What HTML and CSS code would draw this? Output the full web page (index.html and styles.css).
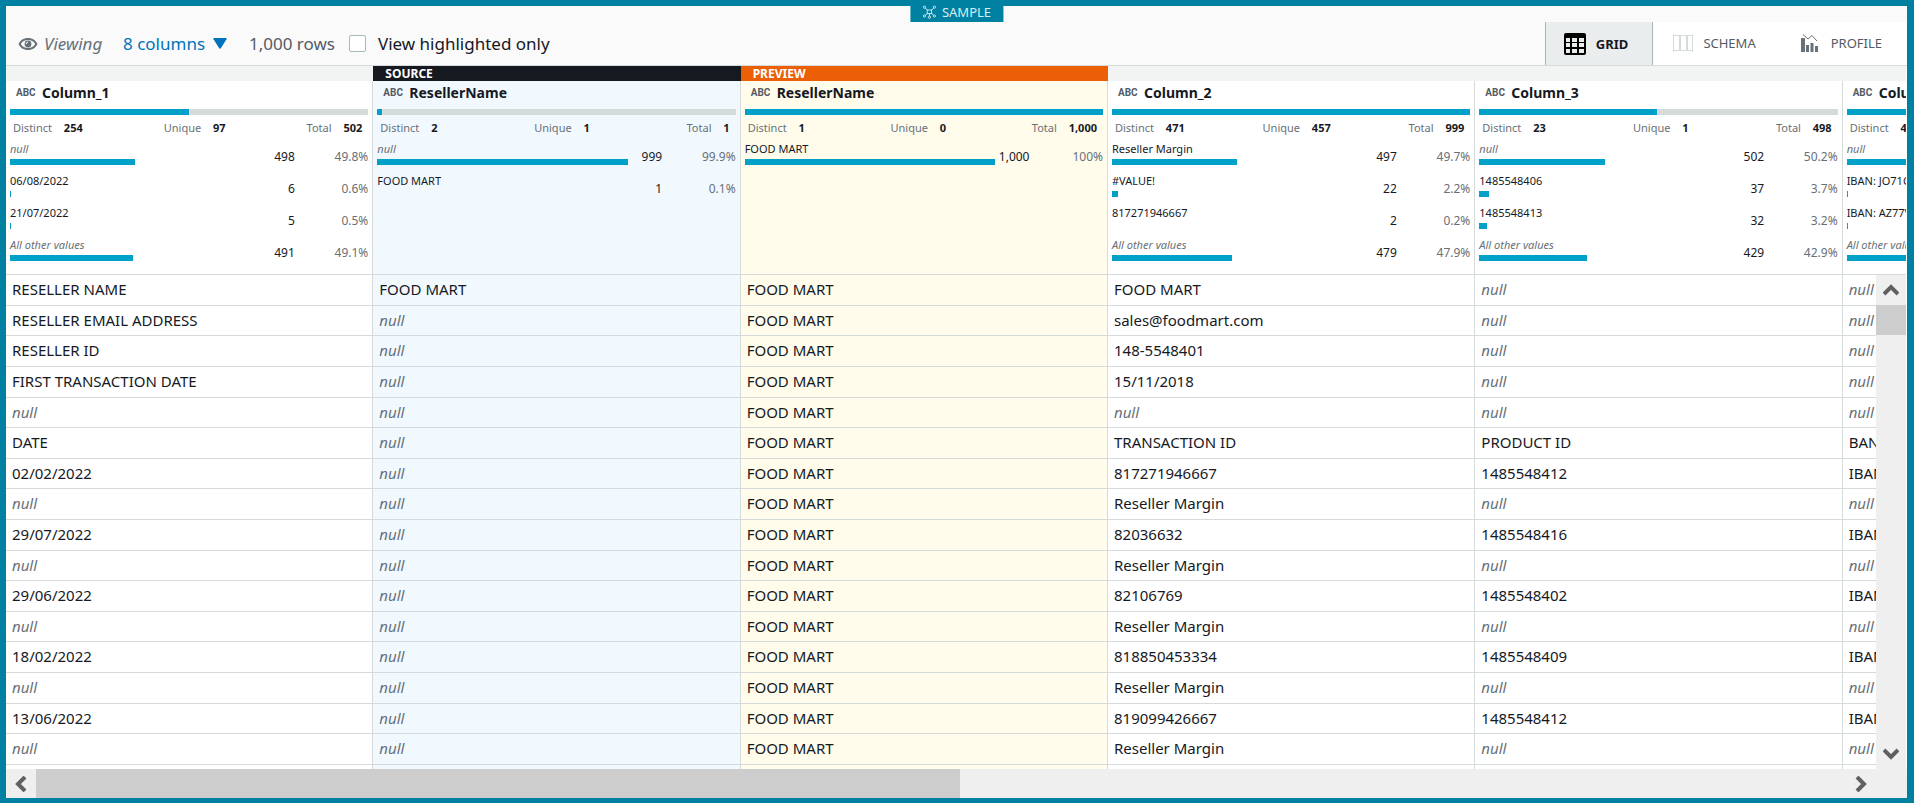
FILE: index.html
```html
<!DOCTYPE html>
<html lang="en">
<head>
<meta charset="utf-8">
<title>Sample</title>
<link rel="stylesheet" href="styles.css">
</head>
<body>
<main class="app">
  <div class="sample-tag">
    <svg width="14" height="14" viewBox="0 0 14 14" fill="none" stroke="currentColor" stroke-width=".9"><rect x="4.800" y="5" width="4.400" height="3.600"/><path d="M4.800 5L2.800 3M9.200 5L11.200 3M4.800 8.600L2.800 10.200M9.200 8.600L11.200 10.200M7 8.600V11"/><circle cx="2" cy="2.200" r="1.100"/><circle cx="12" cy="2.200" r="1.100"/><circle cx="2" cy="11" r="1.100"/><circle cx="12" cy="11" r="1.100"/><circle cx="7" cy="12.200" r="1.200"/></svg>
    <span>SAMPLE</span>
  </div>
  <header class="toolbar">
    <div class="filters">
      <span class="viewing">
        <svg width="20" height="14" viewBox="0 0 20 14"><path fill="currentColor" fill-rule="evenodd" d="M10 1C5.500 1 2.200 3.200 .5 7c1.700 3.800 5 6 9.500 6s7.800-2.200 9.500-6c-1.700-3.800-5-6-9.500-6zM10 3c3.200 0 5.700 1.400 7.200 4-1.500 2.600-4 4-7.200 4s-5.700-1.400-7.200-4C4.300 4.400 6.800 3 10 3z"/><circle cx="10" cy="7" r="3.400" fill="currentColor"/><path d="M8.200 7A1.800 1.800 0 0 1 10 5.200" fill="none" stroke="#fafafa"/></svg>
        <em>Viewing</em>
      </span>
      <button class="columns-menu" type="button">8 columns <svg width="14" height="11" viewBox="0 0 14 11"><path d="M1 0h12q1 .2 .5 1.200L8 10q-1 1.400-2 0L.5 1.200Q0 .2 1 0z" fill="currentColor"/></svg></button>
      <span class="row-count">1,000 rows</span>
      <label class="highlight"><input type="checkbox"><span>View highlighted only</span></label>
    </div>
    <nav class="tabs">
      <button class="tab tab-active" type="button">
        <svg width="22" height="22" viewBox="0 0 22 22"><path fill="#000" fill-rule="evenodd" d="M2 0h18a2 2 0 0 1 2 2v18a2 2 0 0 1-2 2H2a2 2 0 0 1-2-2V2a2 2 0 0 1 2-2zM2 5v4h4V5zM8 5v4h5V5zM15 5v4h5V5zM2 10v4h4v-4zM8 10v4h5v-4zM15 10v4h5v-4zM2 16v4h4v-4zM8 16v4h5v-4zM15 16v4h5v-4z"/></svg>
        GRID
      </button>
      <button class="tab" type="button">
        <svg width="20" height="18" viewBox="0 0 20 18" fill="none" stroke="#d5dbdb"><path d="M.5 0v18M6.500 1v16M7.500 1v16M13.500 1v16M14.500 1v16M19.500 0v18M1 1.500h18M1 16.500h18"/></svg>
        SCHEMA
      </button>
      <button class="tab tab-last" type="button">
        <svg width="18" height="18" viewBox="0 0 18 18"><path d="M0 4.500Q0 4 .5 4h3Q4 4 4 4.500V18H0zM5 11h3v7H5zM9.500 9h3v9h-3zM14 12h3v6h-3z" fill="#687078"/><path d="M2 .5L7 5l4-3.500L16 7" fill="none" stroke="#687078"/></svg>
        PROFILE
      </button>
    </nav>
  </header>
  <section class="grid">
    <table class="data">
      <thead>
        <tr class="bands">
          <td></td>
          <th class="band-source">SOURCE</th>
          <th class="band-preview">PREVIEW</th>
          <td></td><td></td><td></td>
        </tr>
        <tr class="summaries">
          <th>
            <div class="title"><span class="type">ABC</span>Column_1</div>
            <div class="quality"><div class="fill" style="width:50%"></div></div>
            <div class="stats"><span>Distinct <b>254</b></span><span>Unique <b>97</b></span><span>Total <b>502</b></span></div>
            <ul class="values">
              <li><div class="value"><i>null</i><div class="fill" style="width:49.8%"></div></div><span class="count">498</span><span class="pct">49.8%</span></li>
              <li><div class="value"><span>06/08/2022</span><div class="fill" style="width:0.4%"></div></div><span class="count">6</span><span class="pct">0.6%</span></li>
              <li><div class="value"><span>21/07/2022</span><div class="fill" style="width:0.4%"></div></div><span class="count">5</span><span class="pct">0.5%</span></li>
              <li><div class="value"><i>All other values</i><div class="fill" style="width:49.1%"></div></div><span class="count">491</span><span class="pct">49.1%</span></li>
            </ul>
          </th>
          <th class="source">
            <div class="title"><span class="type">ABC</span>ResellerName</div>
            <div class="quality"><div class="fill" style="width:1.4%"></div></div>
            <div class="stats"><span>Distinct <b>2</b></span><span>Unique <b>1</b></span><span>Total <b>1</b></span></div>
            <ul class="values">
              <li><div class="value"><i>null</i><div class="fill" style="width:99.9%"></div></div><span class="count">999</span><span class="pct">99.9%</span></li>
              <li><div class="value"><span>FOOD MART</span></div><span class="count">1</span><span class="pct">0.1%</span></li>
            </ul>
          </th>
          <th class="preview">
            <div class="title"><span class="type">ABC</span>ResellerName</div>
            <div class="quality"><div class="fill" style="width:100%"></div></div>
            <div class="stats"><span>Distinct <b>1</b></span><span>Unique <b>0</b></span><span>Total <b>1,000</b></span></div>
            <ul class="values">
              <li><div class="value"><span>FOOD MART</span><div class="fill" style="width:100%"></div></div><span class="count">1,000</span><span class="pct">100%</span></li>
            </ul>
          </th>
          <th>
            <div class="title"><span class="type">ABC</span>Column_2</div>
            <div class="quality"><div class="fill" style="width:100%"></div></div>
            <div class="stats"><span>Distinct <b>471</b></span><span>Unique <b>457</b></span><span>Total <b>999</b></span></div>
            <ul class="values">
              <li><div class="value"><span>Reseller Margin</span><div class="fill" style="width:49.7%"></div></div><span class="count">497</span><span class="pct">49.7%</span></li>
              <li><div class="value"><span>#VALUE!</span><div class="fill" style="width:2.2%"></div></div><span class="count">22</span><span class="pct">2.2%</span></li>
              <li><div class="value"><span>817271946667</span></div><span class="count">2</span><span class="pct">0.2%</span></li>
              <li><div class="value"><i>All other values</i><div class="fill" style="width:47.9%"></div></div><span class="count">479</span><span class="pct">47.9%</span></li>
            </ul>
          </th>
          <th>
            <div class="title"><span class="type">ABC</span>Column_3</div>
            <div class="quality"><div class="fill" style="width:49.6%"></div></div>
            <div class="stats"><span>Distinct <b>23</b></span><span>Unique <b>1</b></span><span>Total <b>498</b></span></div>
            <ul class="values">
              <li><div class="value"><i>null</i><div class="fill" style="width:50.2%"></div></div><span class="count">502</span><span class="pct">50.2%</span></li>
              <li><div class="value"><span>1485548406</span><div class="fill" style="width:3.7%"></div></div><span class="count">37</span><span class="pct">3.7%</span></li>
              <li><div class="value"><span>1485548413</span><div class="fill" style="width:3.2%"></div></div><span class="count">32</span><span class="pct">3.2%</span></li>
              <li><div class="value"><i>All other values</i><div class="fill" style="width:42.9%"></div></div><span class="count">429</span><span class="pct">42.9%</span></li>
            </ul>
          </th>
          <th>
            <div class="title"><span class="type">ABC</span>Column_4</div>
            <div class="quality"><div class="fill" style="width:50%"></div></div>
            <div class="stats"><span>Distinct <b>471</b></span></div>
            <ul class="values">
              <li><div class="value"><i>null</i><div class="fill" style="width:50%"></div></div></li>
              <li><div class="value"><span>IBAN: JO71CBJO</span><div class="fill" style="width:0.4%"></div></div></li>
              <li><div class="value"><span>IBAN: AZ77VTBA</span><div class="fill" style="width:0.4%"></div></div></li>
              <li><div class="value"><i>All other values</i><div class="fill" style="width:49%"></div></div></li>
            </ul>
          </th>
        </tr>
      </thead>
      <tbody>
        <tr><td>RESELLER NAME</td><td class="source">FOOD MART</td><td class="preview">FOOD MART</td><td>FOOD MART</td><td><i>null</i></td><td><i>null</i></td></tr>
        <tr><td>RESELLER EMAIL ADDRESS</td><td class="source"><i>null</i></td><td class="preview">FOOD MART</td><td>sales@foodmart.com</td><td><i>null</i></td><td><i>null</i></td></tr>
        <tr><td>RESELLER ID</td><td class="source"><i>null</i></td><td class="preview">FOOD MART</td><td>148-5548401</td><td><i>null</i></td><td><i>null</i></td></tr>
        <tr><td>FIRST TRANSACTION DATE</td><td class="source"><i>null</i></td><td class="preview">FOOD MART</td><td>15/11/2018</td><td><i>null</i></td><td><i>null</i></td></tr>
        <tr><td><i>null</i></td><td class="source"><i>null</i></td><td class="preview">FOOD MART</td><td><i>null</i></td><td><i>null</i></td><td><i>null</i></td></tr>
        <tr><td>DATE</td><td class="source"><i>null</i></td><td class="preview">FOOD MART</td><td>TRANSACTION ID</td><td>PRODUCT ID</td><td>BANK</td></tr>
        <tr><td>02/02/2022</td><td class="source"><i>null</i></td><td class="preview">FOOD MART</td><td>817271946667</td><td>1485548412</td><td>IBAN:</td></tr>
        <tr><td><i>null</i></td><td class="source"><i>null</i></td><td class="preview">FOOD MART</td><td>Reseller Margin</td><td><i>null</i></td><td><i>null</i></td></tr>
        <tr><td>29/07/2022</td><td class="source"><i>null</i></td><td class="preview">FOOD MART</td><td>82036632</td><td>1485548416</td><td>IBAN:</td></tr>
        <tr><td><i>null</i></td><td class="source"><i>null</i></td><td class="preview">FOOD MART</td><td>Reseller Margin</td><td><i>null</i></td><td><i>null</i></td></tr>
        <tr><td>29/06/2022</td><td class="source"><i>null</i></td><td class="preview">FOOD MART</td><td>82106769</td><td>1485548402</td><td>IBAN:</td></tr>
        <tr><td><i>null</i></td><td class="source"><i>null</i></td><td class="preview">FOOD MART</td><td>Reseller Margin</td><td><i>null</i></td><td><i>null</i></td></tr>
        <tr><td>18/02/2022</td><td class="source"><i>null</i></td><td class="preview">FOOD MART</td><td>818850453334</td><td>1485548409</td><td>IBAN:</td></tr>
        <tr><td><i>null</i></td><td class="source"><i>null</i></td><td class="preview">FOOD MART</td><td>Reseller Margin</td><td><i>null</i></td><td><i>null</i></td></tr>
        <tr><td>13/06/2022</td><td class="source"><i>null</i></td><td class="preview">FOOD MART</td><td>819099426667</td><td>1485548412</td><td>IBAN:</td></tr>
        <tr><td><i>null</i></td><td class="source"><i>null</i></td><td class="preview">FOOD MART</td><td>Reseller Margin</td><td><i>null</i></td><td><i>null</i></td></tr>
        <tr><td></td><td class="source"></td><td class="preview"></td><td></td><td></td><td></td></tr>
      </tbody>
    </table>
    <div class="vscroll">
      <button type="button" aria-label="Scroll up"><svg width="16" height="12" viewBox="0 0 16 12"><path d="M1 10L8 3l7 7" /></svg></button>
      <div class="vthumb"></div>
      <button class="end" type="button" aria-label="Scroll down"><svg width="16" height="12" viewBox="0 0 16 12"><path d="M1 2l7 7 7-7" /></svg></button>
    </div>
  </section>
  <div class="hscroll">
    <button type="button" aria-label="Scroll left"><svg width="12" height="16" viewBox="0 0 12 16"><path d="M10 1L3 8l7 7" /></svg></button>
    <div class="hthumb" style="width:49.4%"></div>
    <button class="end" type="button" aria-label="Scroll right"><svg width="12" height="16" viewBox="0 0 12 16"><path d="M2 1l7 7-7 7" /></svg></button>
  </div>
</main>
</body>
</html>
```
FILE: styles.css
```css
* { box-sizing: border-box; }

body {
  margin: 0;
  font-family: "Noto Sans", "Open Sans", sans-serif;
  color: #16191f;
  background: #fff;
}

button {
  font: inherit;
  color: inherit;
  background: none;
  border: 0;
  padding: 0;
}

.app {
  position: relative;
  display: flex;
  flex-direction: column;
  height: 100vh;
  border: solid #0081a2;
  border-width: 6px 7px 5px 6px;
}

.sample-tag {
  position: absolute;
  top: -6px;
  left: 50%;
  transform: translateX(-50%);
  display: flex;
  align-items: center;
  gap: 6px;
  height: 22px;
  padding: 2px 12px 0;
  background: #0081a2;
  color: #d9eef3;
  font-size: 13px;
}

/* Toolbar */
.toolbar {
  display: flex;
  justify-content: space-between;
  align-items: flex-end;
  height: 60px;
  flex: none;
  background: #fafafa;
  border-bottom: 1px solid #d5dbdb;
}

.filters {
  display: flex;
  align-items: center;
  height: 43px;
  padding-left: 12px;
  font-size: 17px;
  color: #545b64;
  white-space: nowrap;
}

.viewing {
  display: flex;
  align-items: center;
  gap: 6px;
  width: 105px;
  color: #687078;
}

.columns-menu {
  display: flex;
  align-items: center;
  gap: 8px;
  width: 126px;
  color: #0073bb;
}

.row-count { width: 100px; }

.highlight {
  display: flex;
  align-items: center;
  gap: 12px;
  color: #16191f;
}

.highlight input {
  appearance: none;
  width: 17px;
  height: 17px;
  margin: 0;
  background: #fff;
  border: 1px solid #aab7b8;
  border-radius: 2px;
}

.tabs {
  display: flex;
  height: 43px;
  background: #fff;
}

.tab {
  display: flex;
  align-items: center;
  gap: 10px;
  padding: 0 25px 2px 20px;
  font-size: 13px;
  color: #545b64;
}

.tab-active {
  padding: 0 24px 0 18px;
  background: #eaeded;
  border: solid #aab7b8;
  border-width: 0 1px;
  color: #16191f;
  font-weight: bold;
}

.tab-last { gap: 12px; }

/* Grid */
.grid {
  position: relative;
  flex: 1;
  min-height: 0;
  overflow: hidden;
  margin-right: 1px;
}

.data {
  width: 116%;
  table-layout: fixed;
  border-collapse: separate;
  border-spacing: 0;
}

.data th,
.data td {
  padding: 0;
  text-align: left;
  white-space: nowrap;
}

.data i { color: #687078; }

.data .bands > * {
  height: 15px;
  padding-left: 12px;
  background: #f2f3f3;
  color: #fff;
  font-size: 12px;
  line-height: 15px;
}

.data .bands .band-source { background: #16191f; }
.data .bands .band-preview { background: #eb5f07; }

.data .summaries th {
  height: 194px;
  padding: 0 4px;
  vertical-align: top;
  font-weight: normal;
}

.summaries th,
.data tbody td {
  border: solid #d5dbdb;
  border-width: 0 1px 1px 0;
}

.source { background: #f1f9ff; }
.preview { background: #fffceb; }

.title {
  display: flex;
  align-items: center;
  gap: 6px;
  height: 22px;
  margin-bottom: 6px;
  padding-left: 6px;
  font-size: 14px;
  font-weight: bold;
}

.type {
  width: 20px;
  font-family: "Liberation Sans Narrow", Roboto, "Liberation Sans", sans-serif;
  font-size: 10px;
  color: #545b64;
}

.quality { background: #d5dbdb; }

.fill {
  height: 6px;
  min-width: 1px;
  background: #00a1c9;
}

.stats {
  display: flex;
  justify-content: space-between;
  height: 27px;
  padding: 0 6px 0 3px;
  font-size: 11px;
  line-height: 25px;
  color: #687078;
}

.stats b {
  margin-left: 9px;
  color: #16191f;
}

.values {
  list-style: none;
  margin: 0;
  padding: 0;
}

.values li {
  display: grid;
  grid-template-columns: 70% 34px 1fr;
  height: 32px;
  line-height: 30px;
  font-size: 12px;
  text-align: right;
}

.value {
  text-align: left;
  font-size: 11px;
  line-height: 14px;
}

.value > :first-child {
  display: block;
  margin-bottom: 3px;
}

.pct { color: #687078; }

.data tbody td {
  height: 31px;
  padding: 0 0 2px 6px;
  font-size: 15px;
  line-height: 20px;
}

.data tbody tr:nth-child(5n) td,
.data tbody tr:nth-child(5n + 2) td { height: 30px; }

/* Scroll bars */
.vscroll,
.hscroll {
  display: flex;
  background: #efefef;
}

.vscroll {
  position: absolute;
  top: 209px;
  right: 0;
  bottom: 0;
  flex-direction: column;
  width: 30px;
}

.hscroll {
  flex: none;
  height: 29px;
  padding-right: 31px;
}

.vscroll button,
.hscroll button {
  display: flex;
  flex: none;
  align-items: center;
  justify-content: center;
}

.vscroll button { height: 30px; }
.hscroll button { width: 30px; }

.vscroll path,
.hscroll path {
  fill: none;
  stroke: #606060;
  stroke-width: 4;
}

.vthumb {
  height: 30px;
  background: #cdcdcd;
}

.hthumb { background: #cdcdcd; }

.vscroll .end { margin-top: auto; }
.hscroll .end { margin-left: auto; }
```
